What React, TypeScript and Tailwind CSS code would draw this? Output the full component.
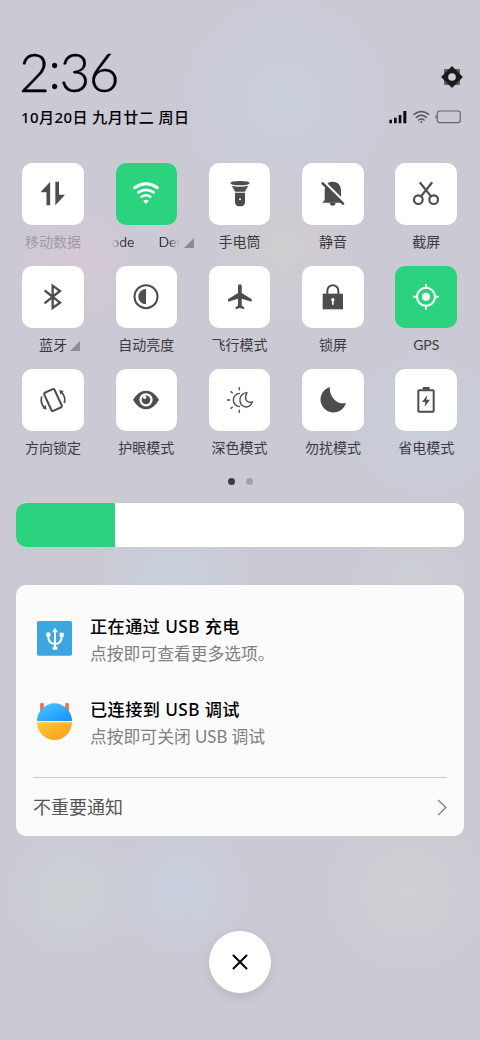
import type { ReactNode } from 'react'

type Tile = {
  label: ReactNode
  icon: ReactNode
  active?: boolean
  dimmed?: boolean
  expandable?: boolean
}

function Glyph({ children }: { children: ReactNode }) {
  return (
    <svg viewBox="0 0 90 90" className="h-[30px] w-[30px]" fill="none" stroke="none">
      {children}
    </svg>
  )
}

// Network name caught mid-scroll, fading out on both sides
function ScrollingName() {
  return (
    <span className="flex w-[70px] gap-[24px] whitespace-nowrap [mask-image:linear-gradient(to_right,transparent_1px,black_12px,black_58px,transparent_69px)]">
      <span>ode</span>
      <span>Der</span>
    </span>
  )
}

const tiles: Tile[] = [
  {
    label: '移动数据',
    dimmed: true,
    icon: (
      <Glyph>
        <path fill="currentColor" d="M36.5 8v71h-11V40h-17v-2zM52 8h11v39h17v2L52 79z" />
      </Glyph>
    ),
  },
  {
    label: <ScrollingName />,
    active: true,
    expandable: true,
    icon: (
      <Glyph>
        <g stroke="currentColor" strokeLinecap="round">
          <path strokeWidth="9" d="M11 26Q45 3 79 26" />
          <path strokeWidth="8" d="M22 40Q45 25 68 40" />
          <path strokeWidth="7.5" d="M32 53Q45 44 58 53" />
        </g>
        <path fill="currentColor" d="M37 65Q45 59 53 65L45 76z" />
      </Glyph>
    ),
  },
  {
    label: '手电筒',
    icon: (
      <Glyph>
        <g fill="currentColor">
          <path d="M16 12Q17 6 45 6T74 12Q73 19 45 19T16 12z" />
          <path d="M20 20Q45 26 70 20L59 38H31z" />
          <path d="M30 41h30v27q0 14-15 14T30 68z" />
        </g>
        <circle cx="45" cy="61" r="3" fill="#fff" />
      </Glyph>
    ),
  },
  {
    label: '静音',
    icon: (
      <Glyph>
        <g fill="currentColor">
          <path d="M20 35q0-27 24-27t25 27v31l5 5H13l7-8z" />
          <path d="M35 71h18q-1 9-9 9t-9-9z" />
        </g>
        <path stroke="#fff" strokeWidth="7" d="M18 8l66 66" />
        <path stroke="currentColor" strokeWidth="8" strokeLinecap="round" d="M14 13l61 61" />
      </Glyph>
    ),
  },
  {
    label: '截屏',
    icon: (
      <Glyph>
        <g stroke="currentColor" strokeWidth="6.5" strokeLinecap="round">
          <circle cx="22" cy="62" r="13" />
          <circle cx="68" cy="62" r="13" />
          <path d="M28 12l32 40M62 12L30 52" />
        </g>
      </Glyph>
    ),
  },
  {
    label: '蓝牙',
    expandable: true,
    icon: (
      <Glyph>
        <path
          stroke="currentColor"
          strokeWidth="7"
          strokeLinecap="round"
          d="M22 27l44 35-22 16V11l22 16-44 35"
        />
      </Glyph>
    ),
  },
  {
    label: '自动亮度',
    icon: (
      <Glyph>
        <circle cx="45" cy="44" r="34.5" stroke="currentColor" strokeWidth="6" />
        <path fill="currentColor" d="M45 21v46a23 23 0 0 1 0-46z" />
      </Glyph>
    ),
  },
  {
    label: '飞行模式',
    icon: (
      <Glyph>
        <path
          fill="currentColor"
          transform="translate(1.5 -.5) scale(3.75)"
          d="M21 16v-2l-8-5V3.5c0-.83-.67-1.5-1.5-1.5S10 2.67 10 3.5V9l-8 5v2l8-2.5V19l-2 1.5V22l3.5-1 3.5 1v-1.5L13 19v-5.5l8 2.5z"
        />
      </Glyph>
    ),
  },
  {
    label: '锁屏',
    icon: (
      <Glyph>
        <path fill="currentColor" d="M14 35h61v47H14z" />
        <path stroke="currentColor" strokeWidth="6" d="M28 36V26a16.5 16.5 0 0 1 33 0v10" />
        <circle cx="44.5" cy="53" r="5" fill="#fff" />
        <path fill="#fff" d="M42 54h5v14h-5z" />
      </Glyph>
    ),
  },
  {
    label: 'GPS',
    active: true,
    icon: (
      <Glyph>
        <circle cx="45" cy="44.5" r="27" stroke="currentColor" strokeWidth="6" />
        <circle cx="45" cy="44.5" r="12" fill="currentColor" />
        <path
          stroke="currentColor"
          strokeWidth="6"
          d="M45 6v12M45 71v12M6.5 44.5h12M71 44.5h12"
        />
      </Glyph>
    ),
  },
  {
    label: '方向锁定',
    icon: (
      <Glyph>
        <g stroke="currentColor" strokeWidth="6">
          <rect x="28" y="15" width="34" height="60" rx="4" transform="rotate(-25 45 45)" />
          <path strokeWidth="5" d="M11 34q-5 20 8 34M79 54q5-18-8-32" />
        </g>
        <path fill="currentColor" d="M26 74l-13-4 10-10zM64 15l13 3-10 11z" />
      </Glyph>
    ),
  },
  {
    label: '护眼模式',
    icon: (
      <Glyph>
        <path fill="currentColor" d="M6 44.5Q22 17 45 17t39 27.5Q68 73 45 73T6 44.5z" />
        <circle cx="45" cy="44.5" r="20" fill="#fff" />
        <circle cx="45" cy="44.5" r="13" fill="currentColor" />
        <circle cx="41" cy="37" r="5" fill="#fff" />
      </Glyph>
    ),
  },
  {
    label: '深色模式',
    icon: (
      <Glyph>
        <g stroke="currentColor" strokeWidth="4.2" strokeLinejoin="round">
          <path d="M45 25a20 20 0 0 0 0 40" />
          <path d="M66 23C38 24 38 66 64 66q12-1 18-15-18 3-20-11-1-10 4-17z" />
          <path d="M43 7v9M43 74v9M6 45h9M17 19l6 6M17 71l6-6" />
        </g>
      </Glyph>
    ),
  },
  {
    label: '勿扰模式',
    icon: (
      <Glyph>
        <path fill="currentColor" d="M35 6a39 39 0 1 0 49 48Q64 58 49 44 35 29 35 6z" />
      </Glyph>
    ),
  },
  {
    label: '省电模式',
    icon: (
      <Glyph>
        <rect x="22" y="16" width="46" height="64" rx="2" stroke="currentColor" strokeWidth="6" />
        <path fill="currentColor" d="M37 6h17q2 0 2 3v5H35V9q0-3 2-3z" />
        <path fill="currentColor" d="M49 30L33 51h10l-2 14 16-21H46z" />
      </Glyph>
    ),
  },
]

function QuickTile({ tile }: { tile: Tile }) {
  return (
    <div className="flex h-[103.1px] flex-col items-center">
      <div
        className={`flex h-[61.5px] w-[61.5px] items-center justify-center rounded-[10px] ${
          tile.active ? 'bg-[#2cd37f] text-white' : 'bg-white text-[#4d4d4d]'
        }`}
      >
        {tile.icon}
      </div>
      <div
        className={`relative mt-[7px] h-5 text-[14px] leading-5 whitespace-nowrap ${
          tile.dimmed ? 'text-[#9d9ca6]' : 'text-[#3b3b40]'
        }`}
      >
        {tile.label}
        {tile.expandable && (
          <svg
            viewBox="0 0 10 10"
            className="absolute bottom-[4px] left-full ml-[3px] h-[10px] w-[10px]"
          >
            <path d="M10 0v10H0z" fill="#8d8c94" />
          </svg>
        )}
      </div>
    </div>
  )
}

function StatusIcons() {
  return (
    <svg viewBox="0 0 216 42" className="h-[14px] w-[72px]" fill="none">
      <path fill="#0d0d0f" d="M1 29h8v11H1zM15 23h8v17h-8zM29 15h8v25h-8zM43 3h9v37h-9z" />
      <g stroke="#55555b" strokeWidth="4.5" strokeLinecap="round">
        <path d="M75 13Q97-4 119 13M82 22Q97 10 112 22M89 30Q97 24 105 30" />
      </g>
      <circle cx="97" cy="36" r="3" fill="#55555b" />
      <rect x="145" y="3" width="69" height="35" rx="7" stroke="#66666c" strokeWidth="3.5" />
      <path stroke="#66666c" strokeWidth="3.5" d="M141 16v9" />
    </svg>
  )
}

function SettingsIcon() {
  return (
    <svg viewBox="0 0 66 66" className="h-[22px] w-[22px]">
      <rect x="9" y="9" width="48" height="48" rx="3" fill="#5c5c61" />
      <path
        d="M33 3l30 30-30 30L3 33z"
        fill="#1b1b1d"
        stroke="#1b1b1d"
        strokeWidth="4"
        strokeLinejoin="round"
      />
      <circle cx="33" cy="33" r="11.5" fill="#d0d0d9" />
    </svg>
  )
}

function UsbIcon() {
  return (
    <svg viewBox="0 0 105 105" className="h-[35px] w-[35px]" fill="none">
      <rect width="105" height="104" rx="5" fill="#3ba6e0" />
      <g stroke="#fff" strokeWidth="6">
        <path d="M54 30v52" />
        <path d="M34 42v6q0 19 20 21 20-2 20-21v-6" />
      </g>
      <path fill="#fff" d="M54 20l9 14H45zM68 35h12v12H68z" />
      <circle cx="34" cy="41" r="7" fill="#fff" />
      <path fill="#fff" d="M47 77h14v9H47z" />
    </svg>
  )
}

function DebugIcon() {
  return (
    <svg viewBox="0 0 105 111" className="-mt-px h-[37px] w-[35px]">
      <defs>
        <linearGradient id="head" x1="0" y1="0" x2="1" y2="1">
          <stop offset="0" stopColor="#50c8fb" />
          <stop offset="1" stopColor="#1590fb" />
        </linearGradient>
        <linearGradient id="body" x1="0" y1="0" x2="1" y2="1">
          <stop offset="0" stopColor="#fdcb35" />
          <stop offset="1" stopColor="#f79a1c" />
        </linearGradient>
      </defs>
      <path d="M15 5v18M90 5v18" stroke="#f4694b" strokeWidth="11" strokeLinecap="round" />
      <path d="M0 54a52.5 53 0 0 1 105 0z" fill="url(#head)" />
      <path d="M0 58h105a52.5 53 0 0 1-105 0z" fill="url(#body)" />
    </svg>
  )
}

type NotificationProps = {
  icon: ReactNode
  title: string
  detail: string
}

function Notification({ icon, title, detail }: NotificationProps) {
  return (
    <div className="flex h-[83px] items-start">
      <div className="mt-[7px] w-[53px] shrink-0">{icon}</div>
      <div>
        <p className="font-['Noto_Sans','Noto_Sans_CJK_SC',sans-serif] text-[17.2px] leading-[26px] font-medium tracking-[0.4px] text-black">
          {title}
        </p>
        <p className="mt-px text-[16.8px] leading-[26px] text-[#808080]">{detail}</p>
      </div>
    </div>
  )
}

const backdrop =
  'bg-[radial-gradient(circle_at_75px_265px,#d5c8d3_0,transparent_75px),radial-gradient(circle_at_285px_250px,#d0cdd0_0,transparent_90px),radial-gradient(circle_at_285px_100px,#c9cfdb_0,transparent_130px),radial-gradient(circle_at_425px_425px,#c8cfdb_0,transparent_90px),radial-gradient(circle_at_175px_580px,#c8d0d9_0,transparent_90px),radial-gradient(circle_at_410px_580px,#cbcfd3_0,transparent_70px),radial-gradient(circle_at_70px_893px,#cbd1d4_0,transparent_75px),radial-gradient(circle_at_183px_890px,#c9d0dd_0,transparent_80px),radial-gradient(circle_at_407px_893px,#ced1d3_0,transparent_95px)]'

export default function App() {
  return (
    <main
      className={`flex h-[1040px] w-[480px] flex-col overflow-hidden bg-[#cac9d4] font-[Lato,'Noto_Sans_CJK_SC',sans-serif] ${backdrop}`}
    >
      <header className="flex h-[163px] justify-between pt-[42px] pr-[17.5px] pl-[21px]">
        <div>
          <div className="-ml-[2px] flex h-[60px] items-center text-[53px] leading-[60px] font-light tracking-[-1.5px] text-black [-webkit-text-stroke:0.4px_black]">
            <span>2</span>
            <span className="-mt-[6px]">:</span>
            <span>36</span>
          </div>
          <p className="mt-[3px] font-['Noto_Sans','Noto_Sans_CJK_SC',sans-serif] text-[15px] leading-6 font-medium tracking-[0.45px] whitespace-nowrap text-black">
            10月20日 九月廿二 周日
          </p>
        </div>
        <div className="flex flex-col items-end pt-[24px]">
          <SettingsIcon />
          <div className="mt-[22px] mr-[1.5px]">
            <StatusIcons />
          </div>
        </div>
      </header>

      <section className="grid grid-cols-5 pr-[7.1px] pl-[6.3px]">
        {tiles.map((tile, index) => (
          <QuickTile key={index} tile={tile} />
        ))}
      </section>

      <div className="mt-[6px] flex justify-center gap-[11px]">
        <span className="h-[7px] w-[7px] rounded-full bg-[#3c3c42]" />
        <span className="h-[7px] w-[7px] rounded-full bg-[#a2a1ab]" />
      </div>

      <div className="mx-4 mt-[17.5px] h-[44px] shrink-0 overflow-hidden rounded-[10px] bg-white">
        <div className="h-full w-[98.5px] bg-[#2cd37f]" />
      </div>

      <section className="mx-4 mt-[38px] h-[251px] shrink-0 rounded-[10px] bg-[#fbfbfc] px-[17px] pt-[29.5px]">
        <div className="h-[163.5px] border-b border-[#cbcbcc] pl-1">
          <Notification icon={<UsbIcon />} title="正在通过 USB 充电" detail="点按即可查看更多选项。" />
          <Notification icon={<DebugIcon />} title="已连接到 USB 调试" detail="点按即可关闭 USB 调试" />
        </div>
        <div className="flex h-[58px] items-center justify-between pt-[2px] text-[18px] text-[#555555]">
          不重要通知
          <svg viewBox="0 0 10 18" className="h-[17px] w-[10px]" fill="none">
            <path d="M1 1l8 8-8 8" stroke="#858585" strokeWidth="1.5" />
          </svg>
        </div>
      </section>

      <button
        type="button"
        aria-label="关闭"
        className="mx-auto mt-[95px] flex h-[62px] w-[62px] shrink-0 items-center justify-center rounded-full bg-white shadow-[0_4px_12px_rgba(0,0,0,0.09)]"
      >
        <svg viewBox="0 0 16 16" className="h-4 w-4">
          <path
            d="M1.5 1.5l13 13M14.5 1.5l-13 13"
            stroke="#000"
            strokeWidth="2"
            strokeLinecap="round"
          />
        </svg>
      </button>
    </main>
  )
}
